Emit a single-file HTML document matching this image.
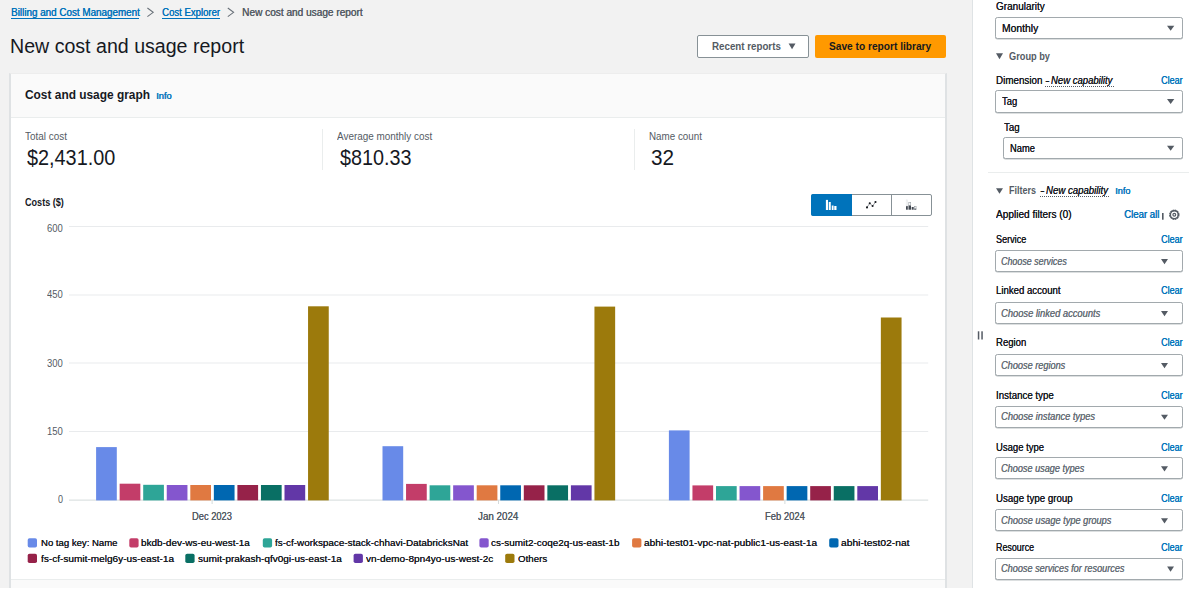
<!DOCTYPE html>
<html><head><meta charset="utf-8">
<style>
html,body{margin:0;padding:0;}
body{width:1200px;height:608px;position:relative;overflow:hidden;background:#ffffff;font-family:"Liberation Sans",sans-serif;}
.ab{position:absolute;box-sizing:border-box;}
.tx{position:absolute;white-space:nowrap;line-height:1;transform-origin:0 0;}
#bg{left:0;top:0;width:1200px;height:588px;background:#f2f2f2;}
#card{left:9px;top:72.5px;width:938px;height:515.5px;background:#fff;border-left:2px solid #dfe2e4;border-right:2px solid #dfe2e4;border-top:1px solid #ededed;}
#cardhead{left:11px;top:73.5px;width:934px;height:44.2px;background:#fafafa;border-bottom:1px solid #eaeded;}
#cardfoot{left:11px;top:579px;width:934px;height:9px;background:#fafafa;border-top:1px solid #eaeded;}
#side{left:972px;top:0;width:228px;height:588px;background:#fff;border-left:1px solid #dfe3e5;}
.sel{position:absolute;box-sizing:border-box;background:#fff;border:1px solid #a2a9ad;border-radius:2.5px;box-shadow:0 0.6px 0 #b9bfc2;}
.vd{position:absolute;width:1px;background:#eaeded;}
</style></head><body>
<div id="bg" class="ab"></div>
<!-- breadcrumb underlines & chevrons -->
<div class="ab" style="left:10.6px;top:18px;width:128.8px;height:1px;background:#0073bb"></div>
<div class="ab" style="left:161.6px;top:18px;width:58.4px;height:1px;background:#0073bb"></div>
<svg class="ab" style="left:0;top:0" width="260" height="24">
<polyline points="147.4,8 153.2,12.3 147.4,16.6" fill="none" stroke="#687078" stroke-width="1.05"/>
<polyline points="227.8,8 233.6,12.3 227.8,16.6" fill="none" stroke="#687078" stroke-width="1.05"/>
</svg>
<!-- buttons -->
<div class="ab" style="left:697px;top:35px;width:112px;height:22.5px;background:#fff;border:1px solid #879196;border-radius:2px"></div>
<svg class="ab" style="left:0;top:0" width="1200" height="70"><polygon points="788.6,43.6 795.5,43.6 792.05,49.2" fill="#545b64"/></svg>
<div class="ab" style="left:814.6px;top:35px;width:131px;height:22.5px;background:#ff9900;border-radius:2px"></div>
<!-- card -->
<div id="card" class="ab"></div>
<div id="cardhead" class="ab"></div>
<div id="cardfoot" class="ab"></div>
<div class="vd" style="left:322px;top:129px;height:40.5px"></div>
<div class="vd" style="left:633.5px;top:129px;height:40.5px"></div>
<svg class="ab" style="left:0;top:0" width="1200" height="608"><rect x="69" y="226.0" width="859.2" height="1" fill="#e9ebed"/><rect x="69" y="294.5" width="859.2" height="1" fill="#e9ebed"/><rect x="69" y="362.5" width="859.2" height="1" fill="#e9ebed"/><rect x="69" y="431.0" width="859.2" height="1" fill="#e9ebed"/><rect x="69" y="499.6" width="859.2" height="1" fill="#d5dbdb"/><rect x="211.6" y="500" width="1" height="4" fill="#d5dbdb"/><rect x="498.0" y="500" width="1" height="4" fill="#d5dbdb"/><rect x="784.4" y="500" width="1" height="4" fill="#d5dbdb"/><rect x="96.10" y="447.10" width="20.7" height="53.30" fill="#688ae8"/><rect x="119.65" y="483.70" width="20.7" height="16.70" fill="#c33d69"/><rect x="143.20" y="484.80" width="20.7" height="15.60" fill="#2ea597"/><rect x="166.75" y="485.00" width="20.7" height="15.40" fill="#8456ce"/><rect x="190.30" y="485.00" width="20.7" height="15.40" fill="#e07941"/><rect x="213.85" y="485.00" width="20.7" height="15.40" fill="#0067b1"/><rect x="237.40" y="485.00" width="20.7" height="15.40" fill="#962249"/><rect x="260.95" y="485.00" width="20.7" height="15.40" fill="#096f64"/><rect x="284.50" y="485.00" width="20.7" height="15.40" fill="#6237a7"/><rect x="308.05" y="306.30" width="20.7" height="194.10" fill="#9c7a0c"/><rect x="382.50" y="446.20" width="20.7" height="54.20" fill="#688ae8"/><rect x="406.05" y="483.90" width="20.7" height="16.50" fill="#c33d69"/><rect x="429.60" y="485.30" width="20.7" height="15.10" fill="#2ea597"/><rect x="453.15" y="485.30" width="20.7" height="15.10" fill="#8456ce"/><rect x="476.70" y="485.30" width="20.7" height="15.10" fill="#e07941"/><rect x="500.25" y="485.30" width="20.7" height="15.10" fill="#0067b1"/><rect x="523.80" y="485.30" width="20.7" height="15.10" fill="#962249"/><rect x="547.35" y="485.30" width="20.7" height="15.10" fill="#096f64"/><rect x="570.90" y="485.30" width="20.7" height="15.10" fill="#6237a7"/><rect x="594.45" y="306.60" width="20.7" height="193.80" fill="#9c7a0c"/><rect x="668.90" y="430.40" width="20.7" height="70.00" fill="#688ae8"/><rect x="692.45" y="485.40" width="20.7" height="15.00" fill="#c33d69"/><rect x="716.00" y="486.10" width="20.7" height="14.30" fill="#2ea597"/><rect x="739.55" y="486.10" width="20.7" height="14.30" fill="#8456ce"/><rect x="763.10" y="486.10" width="20.7" height="14.30" fill="#e07941"/><rect x="786.65" y="486.10" width="20.7" height="14.30" fill="#0067b1"/><rect x="810.20" y="486.10" width="20.7" height="14.30" fill="#962249"/><rect x="833.75" y="486.10" width="20.7" height="14.30" fill="#096f64"/><rect x="857.30" y="486.10" width="20.7" height="14.30" fill="#6237a7"/><rect x="880.85" y="317.50" width="20.7" height="182.90" fill="#9c7a0c"/><rect x="27.7" y="538.3" width="9.3" height="9.3" rx="1.8" fill="#688ae8"/><rect x="129.3" y="538.3" width="9.3" height="9.3" rx="1.8" fill="#c33d69"/><rect x="262.8" y="538.3" width="9.3" height="9.3" rx="1.8" fill="#2ea597"/><rect x="479.4" y="538.3" width="9.3" height="9.3" rx="1.8" fill="#8456ce"/><rect x="632.1" y="538.3" width="9.3" height="9.3" rx="1.8" fill="#e07941"/><rect x="829.2" y="538.3" width="9.3" height="9.3" rx="1.8" fill="#0067b1"/><rect x="27.7" y="553.8" width="9.3" height="9.3" rx="1.8" fill="#962249"/><rect x="185.3" y="553.8" width="9.3" height="9.3" rx="1.8" fill="#096f64"/><rect x="353.6" y="553.8" width="9.3" height="9.3" rx="1.8" fill="#6237a7"/><rect x="505.2" y="553.8" width="9.3" height="9.3" rx="1.8" fill="#9c7a0c"/></svg>
<!-- toggle -->
<div class="ab" style="left:811.2px;top:194.2px;width:120.4px;height:21.4px;border:1px solid #879196;border-radius:2px;background:#fff"></div>
<div class="ab" style="left:811.2px;top:194.2px;width:40.6px;height:21.4px;background:#0073bb;border-radius:2px 0 0 2px"></div>
<div class="ab" style="left:891px;top:194.2px;width:1px;height:21.4px;background:#879196"></div>
<svg class="ab" style="left:0;top:0" width="1200" height="230">
<rect x="825.9" y="199.9" width="2.1" height="10.1" fill="#fff"/>
<rect x="828.75" y="202" width="2" height="8" fill="#fff"/>
<rect x="831.75" y="205.5" width="1.8" height="4.5" fill="#fff"/>
<rect x="834.25" y="206" width="2.25" height="4" fill="#fff"/>
<polyline points="867,207.4 869.75,203.25 872.6,206 875.5,202" fill="none" stroke="#545b64" stroke-width="0.6"/>
<circle cx="867" cy="207.4" r="1.05" fill="#16191f"/><circle cx="869.75" cy="203.25" r="1.05" fill="#16191f"/><circle cx="872.6" cy="206" r="1.05" fill="#16191f"/><circle cx="875.5" cy="202" r="1.05" fill="#16191f"/>
<rect x="906" y="206" width="1.8" height="3.7" fill="#414750"/>
<rect x="908.5" y="205.3" width="2.5" height="4.4" fill="#414750"/>
<rect x="911.7" y="207" width="2" height="2.7" fill="#414750"/>
<rect x="914.2" y="208.7" width="2.1" height="1" fill="#414750"/>
<rect x="906.2" y="199.9" width="1.4" height="6" fill="none" stroke="#e3e6e8" stroke-width="0.6"/>
<rect x="908.8" y="202.4" width="1.9" height="2.9" fill="none" stroke="#9aa0a6" stroke-width="0.6"/>
<rect x="914.4" y="206.5" width="1.7" height="2.2" fill="none" stroke="#9aa0a6" stroke-width="0.6"/>
</svg>
<!-- sidebar -->
<div id="side" class="ab"></div>
<div class="sel" style="left:995.1px;top:17.2px;width:187.6px;height:22.2px"></div>
<div class="sel" style="left:995.1px;top:90.4px;width:187.6px;height:22.3px"></div>
<div class="sel" style="left:1003.1px;top:137.2px;width:179.6px;height:22.2px"></div>
<div class="ab" style="left:988px;top:172px;width:201px;height:1px;background:#eaeded"></div>
<div class="sel" style="left:995.1px;top:250.2px;width:187.6px;height:21.8px"></div>
<div class="sel" style="left:995.1px;top:302.2px;width:187.6px;height:21.8px"></div>
<div class="sel" style="left:995.1px;top:354.2px;width:187.6px;height:21.8px"></div>
<div class="sel" style="left:995.1px;top:405.8px;width:187.6px;height:21.8px"></div>
<div class="sel" style="left:995.1px;top:457.4px;width:187.6px;height:21.8px"></div>
<div class="sel" style="left:995.1px;top:509.4px;width:187.6px;height:21.8px"></div>
<div class="sel" style="left:995.1px;top:557.8px;width:187.6px;height:21.9px"></div>
<!-- dotted underlines -->
<div class="ab" style="left:1045px;top:86px;width:69px;height:0;border-top:1px dotted #545b64"></div>
<div class="ab" style="left:1039.6px;top:196.4px;width:69.3px;height:0;border-top:1px dotted #545b64"></div>
<svg class="ab" style="left:960px;top:0" width="240" height="608">
<polygon points="207,25.7 214.3,25.7 210.65,30.8" fill="#545b64"/>
<polygon points="207,99 214.3,99 210.65,104.1" fill="#545b64"/>
<polygon points="207,145.7 214.3,145.7 210.65,150.8" fill="#545b64"/>
<polygon points="36,53.2 43,53.2 39.5,59.2" fill="#545b64"/>
<polygon points="36,188.3 43,188.3 39.5,193.7" fill="#545b64"/>
<rect x="202" y="213" width="1.6" height="6.7" fill="#545b64"/>
<g transform="translate(214.3,214.7)" fill="none" stroke="#545b64">
<circle r="4.4" stroke-width="1.6" stroke-dasharray="1.7 0.6"/>
<circle r="3.9" stroke-width="1.4"/>
<circle r="1.4" stroke-width="1.2"/>
</g>
<polygon points="201,259.1 208,259.1 204.5,264.2" fill="#545b64"/>
<polygon points="201,311.1 208,311.1 204.5,316.2" fill="#545b64"/>
<polygon points="201,363.1 208,363.1 204.5,368.2" fill="#545b64"/>
<polygon points="201,414.7 208,414.7 204.5,419.8" fill="#545b64"/>
<polygon points="201,466.3 208,466.3 204.5,471.4" fill="#545b64"/>
<polygon points="201,518.3 208,518.3 204.5,523.4" fill="#545b64"/>
<polygon points="207.1,566.6 214,566.6 210.55,571.8" fill="#545b64"/>
<rect x="17.8" y="331.3" width="1.5" height="8.2" fill="#545b64"/>
<rect x="21.3" y="331.3" width="1.5" height="8.2" fill="#545b64"/>
</svg>
<span class="tx" style="left:10.60px;top:8.00px;font-size:10.4px;font-weight:400;text-shadow:0.38px 0 0 #0073bb;color:#0073bb;transform:scaleX(0.9481);">Billing and Cost Management</span>
<span class="tx" style="left:161.60px;top:8.00px;font-size:10.4px;font-weight:400;text-shadow:0.38px 0 0 #0073bb;color:#0073bb;transform:scaleX(0.9199);">Cost Explorer</span>
<span class="tx" style="left:242.40px;top:8.00px;font-size:10.4px;font-weight:400;text-shadow:0.38px 0 0 #545b64;color:#545b64;transform:scaleX(0.9703);">New cost and usage report</span>
<span class="tx" style="left:9.50px;top:37.00px;font-size:19.5px;font-weight:400;color:#16191f;transform:scaleX(1.0046);">New cost and usage report</span>
<span class="tx" style="left:711.70px;top:41.00px;font-size:10.6px;font-weight:700;color:#545b64;transform:scaleX(0.9202);">Recent reports</span>
<span class="tx" style="left:828.70px;top:41.00px;font-size:10.6px;font-weight:700;color:#16191f;transform:scaleX(0.9590);">Save to report library</span>
<span class="tx" style="left:24.50px;top:88.00px;font-size:13.5px;font-weight:700;color:#16191f;transform:scaleX(0.8818);">Cost and usage graph</span>
<span class="tx" style="left:155.70px;top:91.00px;font-size:9.4px;font-weight:400;text-shadow:0.4px 0 0 #0073bb;color:#0073bb;transform:scaleX(0.9920);">Info</span>
<span class="tx" style="left:24.50px;top:132.00px;font-size:10.4px;font-weight:400;color:#545b64;transform:scaleX(0.9545);">Total cost</span>
<span class="tx" style="left:27.20px;top:148.00px;font-size:21.5px;font-weight:400;color:#16191f;transform:scaleX(0.9228);">$2,431.00</span>
<span class="tx" style="left:336.60px;top:132.00px;font-size:10.4px;font-weight:400;color:#545b64;transform:scaleX(0.9545);">Average monthly cost</span>
<span class="tx" style="left:339.90px;top:148.00px;font-size:21.5px;font-weight:400;color:#16191f;transform:scaleX(0.9195);">$810.33</span>
<span class="tx" style="left:648.50px;top:132.00px;font-size:10.4px;font-weight:400;color:#545b64;transform:scaleX(0.9441);">Name count</span>
<span class="tx" style="left:651.20px;top:148.00px;font-size:21.5px;font-weight:400;color:#16191f;transform:scaleX(0.9627);">32</span>
<span class="tx" style="left:24.50px;top:198.00px;font-size:10.2px;font-weight:700;color:#16191f;transform:scaleX(0.8914);">Costs ($)</span>
<span class="tx" style="left:47.10px;top:224.00px;font-size:10px;font-weight:400;color:#545b64;transform:scaleX(0.9461);">600</span>
<span class="tx" style="left:47.10px;top:290.00px;font-size:10px;font-weight:400;color:#545b64;transform:scaleX(0.9461);">450</span>
<span class="tx" style="left:47.10px;top:359.00px;font-size:10px;font-weight:400;color:#545b64;transform:scaleX(0.9461);">300</span>
<span class="tx" style="left:47.00px;top:427.00px;font-size:10px;font-weight:400;color:#545b64;transform:scaleX(0.9519);">150</span>
<span class="tx" style="left:57.90px;top:495.00px;font-size:10px;font-weight:400;color:#545b64;transform:scaleX(0.9000);">0</span>
<span class="tx" style="left:192.00px;top:512.00px;font-size:10.2px;font-weight:400;text-shadow:0.1px 0 0 #545b64;color:#545b64;transform:scaleX(0.9148);">Dec 2023</span>
<span class="tx" style="left:478.40px;top:512.00px;font-size:10.2px;font-weight:400;text-shadow:0.1px 0 0 #545b64;color:#545b64;transform:scaleX(0.9609);">Jan 2024</span>
<span class="tx" style="left:764.90px;top:512.00px;font-size:10.2px;font-weight:400;text-shadow:0.1px 0 0 #545b64;color:#545b64;transform:scaleX(0.9243);">Feb 2024</span>
<span class="tx" style="left:40.70px;top:538.00px;font-size:9.9px;font-weight:400;text-shadow:0.1px 0 0 #16191f;color:#16191f;transform:scaleX(0.9668);">No tag key: Name</span>
<span class="tx" style="left:141.40px;top:538.00px;font-size:9.9px;font-weight:400;text-shadow:0.1px 0 0 #16191f;color:#16191f;transform:scaleX(1.0062);">bkdb-dev-ws-eu-west-1a</span>
<span class="tx" style="left:274.50px;top:538.00px;font-size:9.9px;font-weight:400;text-shadow:0.1px 0 0 #16191f;color:#16191f;transform:scaleX(1.0022);">fs-cf-workspace-stack-chhavi-DatabricksNat</span>
<span class="tx" style="left:491.30px;top:538.00px;font-size:9.9px;font-weight:400;text-shadow:0.1px 0 0 #16191f;color:#16191f;transform:scaleX(1.0040);">cs-sumit2-coqe2q-us-east-1b</span>
<span class="tx" style="left:644.00px;top:538.00px;font-size:9.9px;font-weight:400;text-shadow:0.1px 0 0 #16191f;color:#16191f;transform:scaleX(1.0238);">abhi-test01-vpc-nat-public1-us-east-1a</span>
<span class="tx" style="left:841.40px;top:538.00px;font-size:9.9px;font-weight:400;text-shadow:0.1px 0 0 #16191f;color:#16191f;transform:scaleX(1.0388);">abhi-test02-nat</span>
<span class="tx" style="left:40.70px;top:554.00px;font-size:9.9px;font-weight:400;text-shadow:0.1px 0 0 #16191f;color:#16191f;transform:scaleX(1.0183);">fs-cf-sumit-melg6y-us-east-1a</span>
<span class="tx" style="left:197.70px;top:554.00px;font-size:9.9px;font-weight:400;text-shadow:0.1px 0 0 #16191f;color:#16191f;transform:scaleX(1.0155);">sumit-prakash-qfv0gi-us-east-1a</span>
<span class="tx" style="left:365.70px;top:554.00px;font-size:9.9px;font-weight:400;text-shadow:0.1px 0 0 #16191f;color:#16191f;transform:scaleX(1.0168);">vn-demo-8pn4yo-us-west-2c</span>
<span class="tx" style="left:517.60px;top:554.00px;font-size:9.9px;font-weight:400;text-shadow:0.1px 0 0 #16191f;color:#16191f;transform:scaleX(0.9833);">Others</span>
<span class="tx" style="left:995.60px;top:2.00px;font-size:10px;font-weight:400;text-shadow:0.12px 0 0 #16191f;color:#16191f;transform:scaleX(0.9958);">Granularity</span>
<span class="tx" style="left:1001.70px;top:24.00px;font-size:10px;font-weight:400;text-shadow:0.12px 0 0 #16191f;color:#16191f;transform:scaleX(1.0339);">Monthly</span>
<span class="tx" style="left:1008.80px;top:52.00px;font-size:10.4px;font-weight:700;color:#545b64;transform:scaleX(0.8879);">Group by</span>
<span class="tx" style="left:995.60px;top:76.00px;font-size:10px;font-weight:400;text-shadow:0.12px 0 0 #16191f;color:#16191f;transform:scaleX(0.9812);">Dimension</span>
<span class="tx" style="left:1044.90px;top:76.00px;font-size:10px;font-weight:400;text-shadow:0.3px 0 0 #16191f;color:#16191f;transform:scaleX(1.3000);">-</span>
<span class="tx" style="left:1051.30px;top:76.00px;font-size:10px;font-weight:400;font-style:italic;text-shadow:0.12px 0 0 #16191f;color:#16191f;transform:scaleX(0.9515);">New capability</span>
<span class="tx" style="left:1160.60px;top:76.00px;font-size:10px;font-weight:400;text-shadow:0.4px 0 0 #0073bb;color:#0073bb;transform:scaleX(0.8955);">Clear</span>
<span class="tx" style="left:1002.00px;top:97.00px;font-size:10px;font-weight:400;text-shadow:0.12px 0 0 #16191f;color:#16191f;transform:scaleX(0.9446);">Tag</span>
<span class="tx" style="left:1003.80px;top:123.00px;font-size:10px;font-weight:400;text-shadow:0.12px 0 0 #16191f;color:#16191f;transform:scaleX(0.9703);">Tag</span>
<span class="tx" style="left:1009.70px;top:144.00px;font-size:10px;font-weight:400;text-shadow:0.12px 0 0 #16191f;color:#16191f;transform:scaleX(0.9331);">Name</span>
<span class="tx" style="left:1008.80px;top:186.00px;font-size:10.4px;font-weight:700;color:#545b64;transform:scaleX(0.8662);">Filters</span>
<span class="tx" style="left:1039.60px;top:186.00px;font-size:10px;font-weight:400;text-shadow:0.3px 0 0 #16191f;color:#16191f;transform:scaleX(1.3000);">-</span>
<span class="tx" style="left:1046.00px;top:186.00px;font-size:10px;font-weight:400;font-style:italic;text-shadow:0.12px 0 0 #16191f;color:#16191f;transform:scaleX(0.9607);">New capability</span>
<span class="tx" style="left:1114.80px;top:187.00px;font-size:9.2px;font-weight:400;text-shadow:0.4px 0 0 #0073bb;color:#0073bb;transform:scaleX(0.9990);">Info</span>
<span class="tx" style="left:995.60px;top:210.00px;font-size:10px;font-weight:400;text-shadow:0.12px 0 0 #16191f;color:#16191f;transform:scaleX(1.0067);">Applied filters (0)</span>
<span class="tx" style="left:1124.30px;top:210.00px;font-size:10px;font-weight:400;text-shadow:0.4px 0 0 #0073bb;color:#0073bb;transform:scaleX(0.9600);">Clear all</span>
<span class="tx" style="left:995.60px;top:235.00px;font-size:10px;font-weight:400;text-shadow:0.12px 0 0 #16191f;color:#16191f;transform:scaleX(0.9058);">Service</span>
<span class="tx" style="left:1160.60px;top:235.00px;font-size:10px;font-weight:400;text-shadow:0.4px 0 0 #0073bb;color:#0073bb;transform:scaleX(0.8955);">Clear</span>
<span class="tx" style="left:1001.30px;top:257.00px;font-size:10px;font-weight:400;font-style:italic;text-shadow:0.18px 0 0 #687078;color:#687078;transform:scaleX(0.8888);">Choose services</span>
<span class="tx" style="left:995.60px;top:286.00px;font-size:10px;font-weight:400;text-shadow:0.12px 0 0 #16191f;color:#16191f;transform:scaleX(0.9586);">Linked account</span>
<span class="tx" style="left:1160.60px;top:286.00px;font-size:10px;font-weight:400;text-shadow:0.4px 0 0 #0073bb;color:#0073bb;transform:scaleX(0.8955);">Clear</span>
<span class="tx" style="left:1001.30px;top:309.00px;font-size:10px;font-weight:400;font-style:italic;text-shadow:0.18px 0 0 #687078;color:#687078;transform:scaleX(0.9343);">Choose linked accounts</span>
<span class="tx" style="left:995.60px;top:338.00px;font-size:10px;font-weight:400;text-shadow:0.12px 0 0 #16191f;color:#16191f;transform:scaleX(0.9541);">Region</span>
<span class="tx" style="left:1160.60px;top:338.00px;font-size:10px;font-weight:400;text-shadow:0.4px 0 0 #0073bb;color:#0073bb;transform:scaleX(0.8955);">Clear</span>
<span class="tx" style="left:1001.30px;top:361.00px;font-size:10px;font-weight:400;font-style:italic;text-shadow:0.18px 0 0 #687078;color:#687078;transform:scaleX(0.9166);">Choose regions</span>
<span class="tx" style="left:995.60px;top:391.00px;font-size:10px;font-weight:400;text-shadow:0.12px 0 0 #16191f;color:#16191f;transform:scaleX(0.9696);">Instance type</span>
<span class="tx" style="left:1160.60px;top:391.00px;font-size:10px;font-weight:400;text-shadow:0.4px 0 0 #0073bb;color:#0073bb;transform:scaleX(0.8955);">Clear</span>
<span class="tx" style="left:1001.30px;top:412.00px;font-size:10px;font-weight:400;font-style:italic;text-shadow:0.18px 0 0 #687078;color:#687078;transform:scaleX(0.9291);">Choose instance types</span>
<span class="tx" style="left:995.60px;top:443.00px;font-size:10px;font-weight:400;text-shadow:0.12px 0 0 #16191f;color:#16191f;transform:scaleX(0.9486);">Usage type</span>
<span class="tx" style="left:1160.60px;top:443.00px;font-size:10px;font-weight:400;text-shadow:0.4px 0 0 #0073bb;color:#0073bb;transform:scaleX(0.8955);">Clear</span>
<span class="tx" style="left:1001.30px;top:464.00px;font-size:10px;font-weight:400;font-style:italic;text-shadow:0.18px 0 0 #687078;color:#687078;transform:scaleX(0.9126);">Choose usage types</span>
<span class="tx" style="left:995.60px;top:494.00px;font-size:10px;font-weight:400;text-shadow:0.12px 0 0 #16191f;color:#16191f;transform:scaleX(0.9700);">Usage type group</span>
<span class="tx" style="left:1160.60px;top:494.00px;font-size:10px;font-weight:400;text-shadow:0.4px 0 0 #0073bb;color:#0073bb;transform:scaleX(0.8955);">Clear</span>
<span class="tx" style="left:1001.30px;top:516.00px;font-size:10px;font-weight:400;font-style:italic;text-shadow:0.18px 0 0 #687078;color:#687078;transform:scaleX(0.9228);">Choose usage type groups</span>
<span class="tx" style="left:995.60px;top:543.00px;font-size:10px;font-weight:400;text-shadow:0.12px 0 0 #16191f;color:#16191f;transform:scaleX(0.8881);">Resource</span>
<span class="tx" style="left:1160.60px;top:543.00px;font-size:10px;font-weight:400;text-shadow:0.4px 0 0 #0073bb;color:#0073bb;transform:scaleX(0.8955);">Clear</span>
<span class="tx" style="left:1001.30px;top:564.00px;font-size:10px;font-weight:400;font-style:italic;text-shadow:0.18px 0 0 #687078;color:#687078;transform:scaleX(0.9137);">Choose services for resources</span>
</body></html>
